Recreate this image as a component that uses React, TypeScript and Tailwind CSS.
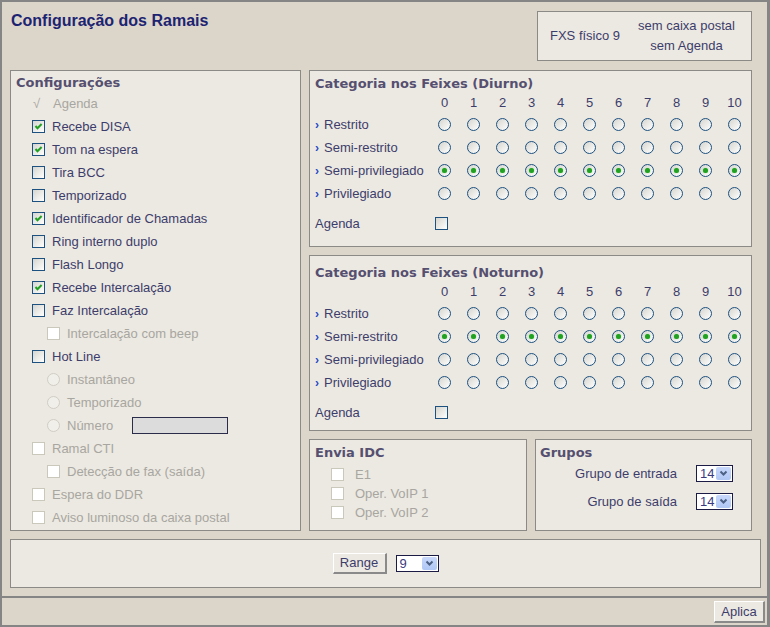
import React from 'react';

const TEXT = 'text-[#3d3d6b]';
const DIS = 'text-[#a8a6a0]';
const HEAD = "font-['DejaVu_Sans',Verdana,sans-serif] font-bold text-[13px] leading-[16px] text-[#554f70]";

type Item = {
  kind: 'mark' | 'cb' | 'radio';
  label: string;
  checked?: boolean;
  sub?: boolean;
  disabled?: boolean;
  input?: boolean;
};

const configs: Item[] = [
  { kind: 'mark', label: 'Agenda' },
  { kind: 'cb', label: 'Recebe DISA', checked: true },
  { kind: 'cb', label: 'Tom na espera', checked: true },
  { kind: 'cb', label: 'Tira BCC' },
  { kind: 'cb', label: 'Temporizado' },
  { kind: 'cb', label: 'Identificador de Chamadas', checked: true },
  { kind: 'cb', label: 'Ring interno duplo' },
  { kind: 'cb', label: 'Flash Longo' },
  { kind: 'cb', label: 'Recebe Intercalação', checked: true },
  { kind: 'cb', label: 'Faz Intercalação' },
  { kind: 'cb', label: 'Intercalação com beep', sub: true, disabled: true },
  { kind: 'cb', label: 'Hot Line' },
  { kind: 'radio', label: 'Instantâneo', sub: true, disabled: true },
  { kind: 'radio', label: 'Temporizado', sub: true, disabled: true },
  { kind: 'radio', label: 'Número', sub: true, disabled: true, input: true },
  { kind: 'cb', label: 'Ramal CTI', disabled: true },
  { kind: 'cb', label: 'Detecção de fax (saída)', sub: true, disabled: true },
  { kind: 'cb', label: 'Espera do DDR', disabled: true },
  { kind: 'cb', label: 'Aviso luminoso da caixa postal', disabled: true },
];

const categories = ['Restrito', 'Semi-restrito', 'Semi-privilegiado', 'Privilegiado'];
const cols = [0, 1, 2, 3, 4, 5, 6, 7, 8, 9, 10];

const Checkbox: React.FC<{ checked?: boolean; disabled?: boolean }> = ({ checked, disabled }) => (
  <span
    className={
      disabled
        ? 'w-[13px] h-[13px] shrink-0 border border-[#cac8bb] bg-white'
        : 'w-[13px] h-[13px] shrink-0 border border-[#1c5180] bg-linear-to-br from-[#d6d5cf] to-white flex items-center justify-center'
    }
  >
    {checked && (
      <svg width="11" height="11" viewBox="0 0 11 11">
        <path d="M2.5 5 L4.5 7.2 L8.6 3" fill="none" stroke="#21a121" strokeWidth="2" />
      </svg>
    )}
  </span>
);

const Radio: React.FC<{ checked?: boolean; disabled?: boolean }> = ({ checked, disabled }) => (
  <span
    className={
      disabled
        ? 'w-[13px] h-[13px] shrink-0 rounded-full border border-[#cfcdc3] bg-[#f1efea]'
        : 'w-[13px] h-[13px] shrink-0 rounded-full border border-[#1c5180] bg-linear-to-br from-[#d6d5cf] to-white flex items-center justify-center'
    }
  >
    {checked && <span className="w-[5px] h-[5px] rounded-full bg-[#21a121] shadow-[0_0_1px_#5bd65b]" />}
  </span>
);

const Select: React.FC<{ value: string; w: string }> = ({ value, w }) => (
  <div className={`${w} h-[17px] border border-[#1b1b45] bg-white flex items-center justify-between pl-[3px] pr-[1px]`}>
    <span className="text-[13px] leading-[15px] text-[#3a3a80]">{value}</span>
    <span className="w-[15px] h-[13px] rounded-[2px] bg-linear-to-b from-[#c8d8fb] to-[#b0c7f5] flex items-center justify-center">
      <svg width="9" height="7" viewBox="0 0 9 7">
        <path d="M1.5 1.5 L4.5 4.5 L7.5 1.5" fill="none" stroke="#4d6185" strokeWidth="2" />
      </svg>
    </span>
  </div>
);

const Button: React.FC<{ label: string; w: string; h: string }> = ({ label, w, h }) => (
  <div
    className={`${w} ${h} bg-[#ece9e2] border-t border-l border-t-white border-l-white border-r-2 border-b-2 border-r-[#8a8a8a] border-b-[#8a8a8a] flex items-center justify-center text-[13px] ${TEXT}`}
  >
    {label}
  </div>
);

const ConfigRow: React.FC<{ item: Item }> = ({ item }) => {
  const color = item.kind === 'mark' || item.disabled ? DIS : TEXT;
  return (
    <div className={`h-[23px] flex items-center ${item.sub ? 'pl-[36px]' : 'pl-[21px]'}`}>
      {item.kind === 'mark' && <span className={`w-[21px] pl-[1px] ${DIS}`}>√</span>}
      {item.kind === 'cb' && <Checkbox checked={item.checked} disabled={item.disabled} />}
      {item.kind === 'radio' && <Radio disabled={item.disabled} />}
      <span className={`${item.kind === 'mark' ? '' : 'ml-[7px]'} ${color} ${item.input ? 'w-[65px]' : ''}`}>
        {item.label}
      </span>
      {item.input && <span className="w-[96px] h-[17px] border border-[#2b2b4a] bg-[#dcdcdc]" />}
    </div>
  );
};

const Feixes: React.FC<{ title: string; selected: number; h: string; pt: string }> = ({ title, selected, h, pt }) => (
  <div className={`${h} ${pt} border border-[#8c8a87] bg-[#ece9e2] pl-[5px]`}>
    <div className={HEAD}>{title}</div>
    <div className="h-[21px] flex items-center">
      <span className="w-[115px]" />
      {cols.map(c => (
        <span key={c} className={`w-[29px] text-center ${TEXT}`}>
          {c}
        </span>
      ))}
    </div>
    {categories.map((cat, i) => (
      <div key={cat} className="h-[23px] flex items-center">
        <span className={`w-[115px] flex items-center ${TEXT}`}>
          <span className="w-[9px] text-[12px] font-bold text-[#1f49c7] leading-none">›</span>
          {cat}
        </span>
        {cols.map(c => (
          <span key={c} className="w-[29px] flex justify-center">
            <Radio checked={i === selected} />
          </span>
        ))}
      </div>
    ))}
    <div className="mt-[7px] h-[23px] flex items-center">
      <span className={`w-[120px] ${TEXT}`}>Agenda</span>
      <Checkbox />
    </div>
  </div>
);

export default function App() {
  return (
    <div className="w-[770px] h-[627px] bg-[#dcd5ca] border-l-2 border-t-2 border-b-2 border-r-[3px] border-[#858585] flex flex-col font-['Liberation_Sans',Arial,sans-serif] text-[13px] leading-[16px]">
      <div className="flex-1 pl-[8px]">
        {/* header */}
        <div className="w-[742px] flex justify-between items-start">
          <h1 className="mt-[9px] ml-[1px] text-[16px] leading-[19px] font-bold text-[#1c2472]">
            Configuração dos Ramais
          </h1>
          <div className={`mt-[9px] w-[215px] h-[50px] border border-[#8c8a87] bg-[#ece9e2] flex items-center pl-[12px] ${TEXT}`}>
            <span>FXS físico 9</span>
            <div className="ml-[18px] text-center leading-[20px]">
              <div>sem caixa postal</div>
              <div>sem Agenda</div>
            </div>
          </div>
        </div>

        {/* main */}
        <div className="mt-[9px] w-[742px] flex gap-[8px]">
          <div className="w-[291px] h-[461px] border border-[#8c8a87] bg-[#ece9e2] pt-[4px]">
            <div className={`${HEAD} pl-[5px]`}>Configurações</div>
            <div className="mt-[1px]">
              {configs.map((it, i) => (
                <ConfigRow key={i} item={it} />
              ))}
            </div>
          </div>

          <div className="w-[443px] flex flex-col gap-[8px]">
            <Feixes title="Categoria nos Feixes (Diurno)" selected={2} h="h-[177px]" pt="pt-[5px]" />
            <Feixes title="Categoria nos Feixes (Noturno)" selected={1} h="h-[176px]" pt="pt-[9px]" />
            <div className="flex gap-[8px]">
              <div className="w-[218px] h-[92px] border border-[#8c8a87] bg-[#ece9e2] pt-[5px] pl-[5px]">
                <div className={HEAD}>Envia IDC</div>
                <div className="mt-[4px]">
                  {['E1', 'Oper. VoIP 1', 'Oper. VoIP 2'].map(l => (
                    <div key={l} className="h-[19px] flex items-center pl-[16px]">
                      <Checkbox disabled />
                      <span className={`ml-[11px] ${DIS}`}>{l}</span>
                    </div>
                  ))}
                </div>
              </div>
              <div className="w-[217px] h-[92px] border border-[#8c8a87] bg-[#ece9e2] pt-[5px] pl-[4px]">
                <div className={HEAD}>Grupos</div>
                <div className="mt-[1px] h-[23px] flex items-center">
                  <span className={`w-[137px] text-right ${TEXT}`}>Grupo de entrada</span>
                  <span className="ml-[19px]">
                    <Select value="14" w="w-[37px]" />
                  </span>
                </div>
                <div className="mt-[5px] h-[23px] flex items-center">
                  <span className={`w-[137px] text-right ${TEXT}`}>Grupo de saída</span>
                  <span className="ml-[19px]">
                    <Select value="14" w="w-[37px]" />
                  </span>
                </div>
              </div>
            </div>
          </div>
        </div>

        {/* range */}
        <div className="mt-[8px] w-[751px] h-[49px] border border-[#8c8a87] bg-[#ece9e2] flex items-center justify-center gap-[9px]">
          <Button label="Range" w="w-[54px]" h="h-[21px]" />
          <Select value="9" w="w-[43px]" />
        </div>
      </div>

      {/* footer */}
      <div className="h-[29px] border-t-2 border-[#858585] flex justify-end items-start pt-[3px] pr-[2px]">
        <Button label="Aplica" w="w-[51px]" h="h-[22px]" />
      </div>
    </div>
  );
}
